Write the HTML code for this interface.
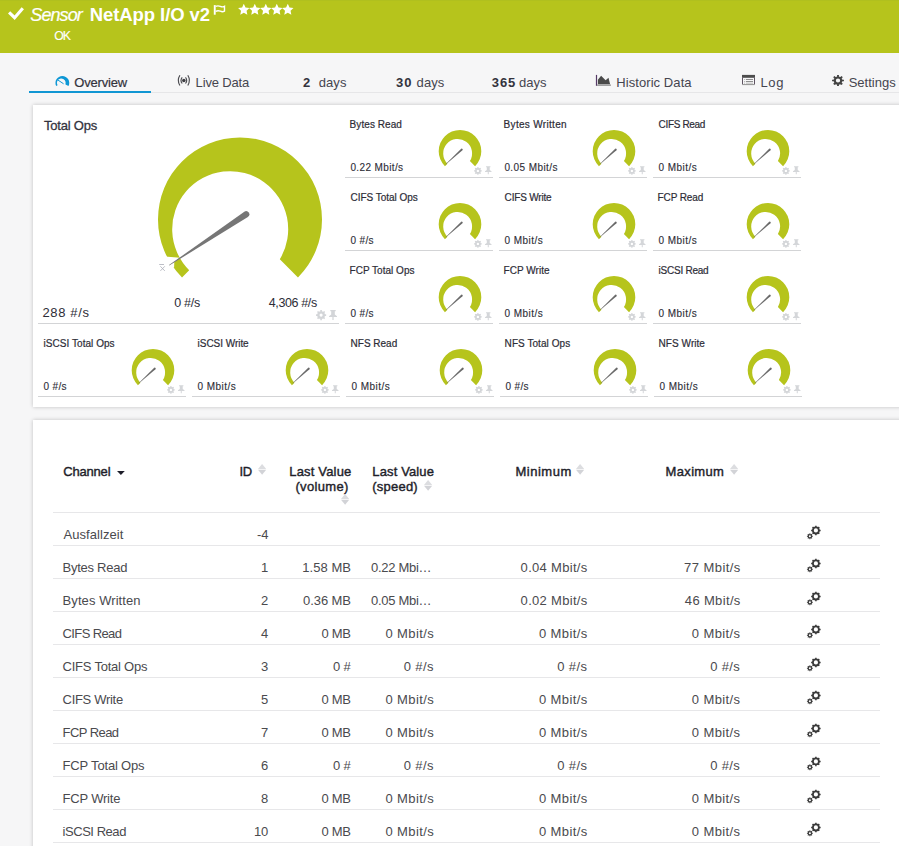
<!DOCTYPE html>
<html><head><meta charset="utf-8"><title>Sensor NetApp I/O v2</title>
<style>
*{margin:0;padding:0;box-sizing:border-box}
html,body{width:899px;height:846px;overflow:hidden}
body{background:#f6f6f7;font-family:"Liberation Sans",sans-serif;color:#3c3c46;position:relative}
.x{position:absolute;white-space:nowrap}
svg{position:absolute;overflow:visible}
#hdr{position:absolute;left:0;top:0;width:899px;height:53px;background:#b6c41c;border-top:1px solid #b0c01e}
.panel{position:absolute;background:#fff;box-shadow:0 0 4px rgba(0,0,0,.22)}
.ul{position:absolute;height:1px;background:#d3d4d6}
.rl{position:absolute;left:53px;width:827px;height:1px;background:#e7e7e9}
</style></head><body>

<div id="hdr"></div>
<svg style="left:7px;top:6px" width="18" height="16" viewBox="7 6 18 16"><path fill="none" stroke="#fff" stroke-width="3.100" stroke-linejoin="miter" d="M9.100 12.300L14.600 17.700L22.800 8.200"/></svg>
<div class="x" style="left:30.3px;top:3px;font-size:18px;line-height:24px;-webkit-text-stroke:0.2px currentColor;font-style:italic;color:#fff;letter-spacing:-0.9px;">Sensor</div>
<div class="x" style="left:89.8px;top:2px;font-size:18.5px;line-height:25px;font-weight:bold;color:#fff;letter-spacing:-0.09px;">NetApp I/O v2</div>
<div class="x" style="left:54.2px;top:28px;font-size:12.3px;line-height:16px;-webkit-text-stroke:0.12px currentColor;color:#fff;letter-spacing:-0.9px;">OK</div>
<svg style="left:205px;top:0px" width="40" height="24" viewBox="205 0 40 24"><path fill="#fff" d="M213.800 5.100h1.900v9.600h-1.900z"/><path fill="none" stroke="#fff" stroke-width="1.400" d="M215.600 6.400Q218 5.400 220.300 6.400T224.500 6.300V11.200Q222.600 12.200 220.300 11.200T215.600 11.300"/></svg>
<svg style="left:236px;top:2px" width="60" height="15" viewBox="236 2 60 15"><path fill="#fff" d="M243.80 3.80L245.50 7.45L249.51 7.95L246.56 10.70L247.33 14.65L243.80 12.70L240.27 14.65L241.04 10.70L238.09 7.95L242.10 7.45ZM254.80 3.80L256.50 7.45L260.51 7.95L257.56 10.70L258.33 14.65L254.80 12.70L251.27 14.65L252.04 10.70L249.09 7.95L253.10 7.45ZM265.80 3.80L267.50 7.45L271.51 7.95L268.56 10.70L269.33 14.65L265.80 12.70L262.27 14.65L263.04 10.70L260.09 7.95L264.10 7.45ZM276.80 3.80L278.50 7.45L282.51 7.95L279.56 10.70L280.33 14.65L276.80 12.70L273.27 14.65L274.04 10.70L271.09 7.95L275.10 7.45ZM287.80 3.80L289.50 7.45L293.51 7.95L290.56 10.70L291.33 14.65L287.80 12.70L284.27 14.65L285.04 10.70L282.09 7.95L286.10 7.45Z"/></svg>
<div class="x" style="left:29px;top:91px;width:122px;height:2px;background:#1196d3"></div>
<div class="x" style="left:151px;top:92px;width:748px;height:1px;background:#e6e6e8"></div>
<svg style="left:54px;top:74px" width="17" height="14" viewBox="54 74 17 14"><path fill="#0d97d5" d="M56.20 86.03A6.90 6.90 0 1 1 68.50 86.03L65.49 84.50A4.45 4.45 0 1 0 57.53 85.36Z"/><path stroke="#0d97d5" stroke-width="1" d="M63.600 83.800L57.900 80"/></svg>
<div class="x" style="left:74.3px;top:74px;font-size:13px;line-height:17px;-webkit-text-stroke:0.2px currentColor;color:#33333d;letter-spacing:-0.2px;">Overview</div>
<svg style="left:170px;top:70px" width="30" height="22" viewBox="170 70 30 22"><g fill="none" stroke="#4b4b50" stroke-width="1.150"><path d="M179.900 75.300Q176.700 80.400 179.900 85.500M187.800 75.300Q191 80.400 187.800 85.500M182.200 77.300Q179.800 80.400 182.200 83.500M185.500 77.300Q187.900 80.400 185.500 83.500"/></g><circle cx="183.850" cy="80.400" r="1.750" fill="#3c3c40"/></svg>
<div class="x" style="left:195.6px;top:74px;font-size:13px;line-height:17px;color:#45454f;letter-spacing:-0.16px;">Live Data</div>
<div class="x" style="left:303.1px;top:74px;font-size:13px;line-height:17px;font-weight:bold;color:#33333d;">2</div>
<div class="x" style="left:318.7px;top:74px;font-size:13px;line-height:17px;color:#45454f;letter-spacing:0.1px;">days</div>
<div class="x" style="left:395.9px;top:74px;font-size:13px;line-height:17px;font-weight:bold;color:#33333d;letter-spacing:1.2px;">30</div>
<div class="x" style="left:416.6px;top:74px;font-size:13px;line-height:17px;color:#45454f;letter-spacing:0.07px;">days</div>
<div class="x" style="left:491.8px;top:74px;font-size:13px;line-height:17px;font-weight:bold;color:#33333d;letter-spacing:0.85px;">365</div>
<div class="x" style="left:519.0px;top:74px;font-size:13px;line-height:17px;color:#45454f;">days</div>
<div class="x" style="left:616.3px;top:74px;font-size:13px;line-height:17px;color:#45454f;letter-spacing:0.07px;">Historic Data</div>
<div class="x" style="left:760.4px;top:74px;font-size:13px;line-height:17px;color:#45454f;letter-spacing:0.65px;">Log</div>
<div class="x" style="left:848.7px;top:74px;font-size:13px;line-height:17px;color:#45454f;letter-spacing:0.01px;">Settings</div>
<svg style="left:590px;top:68px" width="30" height="26" viewBox="590 68 30 26"><path fill="#4a4a4a" d="M597.900 84.200V79.800L601.100 75.700L605.600 80.200L608.500 77.800L610.100 84.200Z"/><path fill="#553a66" d="M595.900 74.900h1.200v10.900h-1.200z"/><path fill="#8c8c8c" d="M597.100 84.500h13.800v1.300h-13.800z"/></svg>
<svg style="left:735px;top:68px" width="30" height="26" viewBox="735 68 30 26"><path fill="#4d4d4d" d="M742 74.900h13v2.900h-13z"/><path fill="#5e5362" d="M742 77.800h1v6.600h-1zM754 77.800h1v6.600h-1z"/><path fill="#9b9b9b" d="M742.300 84h12.400v1.100h-12.400z"/><path fill="#6e6e6e" d="M745.900 79.200h7.100v.8h-7.100zM745.900 81h7.100v.8h-7.100z"/><path fill="#a9a9a9" d="M744 79.200h1v.8h-1zM744 81h1v.8h-1zM744 82.700h1v.8h-1zM745.900 82.700h7.100v.8h-7.100z"/></svg>
<svg style="left:832.1px;top:74.9px" width="12" height="11" viewBox="0 0 12 12" preserveAspectRatio="none"><path fill="#444" fill-rule="nonzero" d="M1.56 6.00A4.44 4.44 0 1 1 10.44 6.00A4.44 4.44 0 1 1 1.56 6.00ZM9.89 5.07L11.93 5.06L11.93 6.94L9.89 6.93ZM9.41 8.09L10.85 9.53L9.53 10.85L8.09 9.41ZM6.93 9.89L6.94 11.93L5.06 11.93L5.07 9.89ZM3.91 9.41L2.47 10.85L1.15 9.53L2.59 8.09ZM2.11 6.93L0.07 6.94L0.07 5.06L2.11 5.07ZM2.59 3.91L1.15 2.47L2.47 1.15L3.91 2.59ZM5.07 2.11L5.06 0.07L6.94 0.07L6.93 2.11ZM8.09 2.59L9.53 1.15L10.85 2.47L9.41 3.91ZM8.16 6.00A2.16 2.16 0 1 0 3.84 6.00A2.16 2.16 0 1 0 8.16 6.00Z"/></svg>
<div class="panel" style="left:33px;top:105px;width:880px;height:302px"></div>
<div class="x" style="left:43.9px;top:117px;font-size:13px;line-height:17px;-webkit-text-stroke:0.28px currentColor;color:#33333e;letter-spacing:-0.2px;">Total Ops</div>
<svg style="left:140px;top:130px" width="200" height="160" viewBox="140 130 200 160">
<path fill="#b6c41c" d="M182.02 277.38A82.00 82.00 0 1 1 297.98 277.38L279.82 259.22A58.00 58.00 0 1 0 189.19 270.21Z"/>
<path fill="#fff" d="M179.900 257.800L165 256.400L165 268.500L174.100 267.400L174.300 262Z"/>
<path fill="#767676" d="M244.32 211.70A3.20 3.20 0 0 1 247.85 217.04L169.26 265.52L168.98 265.11Z"/>
<path stroke="#b0b2bc" stroke-width=".85" fill="none" d="M159.200 264.500h4.800M160.400 266.300l4.400 4.600M164.800 266.300l-4.400 4.600"/>
</svg>
<div class="x" style="left:174.2px;top:295px;font-size:12.5px;line-height:17px;color:#2d2d37;letter-spacing:-0.25px;">0 #/s</div>
<div class="x" style="left:268.8px;top:295px;font-size:12.5px;line-height:17px;color:#2d2d37;letter-spacing:-0.38px;">4,306 #/s</div>
<div class="x" style="left:42.5px;top:304px;font-size:13px;line-height:17px;color:#2d2d37;letter-spacing:0.63px;">288 #/s</div>
<div class="ul" style="left:38px;top:323px;width:301px"></div>
<svg style="left:315.6px;top:310px" width="10.2" height="10.2" viewBox="0 0 10.2 10.2" preserveAspectRatio="none"><path fill="#d3d5d8" fill-rule="nonzero" d="M1.22 5.10A3.88 3.88 0 1 1 8.98 5.10A3.88 3.88 0 1 1 1.22 5.10ZM8.49 4.29L10.14 4.30L10.14 5.90L8.49 5.91ZM8.07 6.92L9.23 8.10L8.10 9.23L6.92 8.07ZM5.91 8.49L5.90 10.14L4.30 10.14L4.29 8.49ZM3.28 8.07L2.10 9.23L0.97 8.10L2.13 6.92ZM1.71 5.91L0.06 5.90L0.06 4.30L1.71 4.29ZM2.13 3.28L0.97 2.10L2.10 0.97L3.28 2.13ZM4.29 1.71L4.30 0.06L5.90 0.06L5.91 1.71ZM6.92 2.13L8.10 0.97L9.23 2.10L8.07 3.28ZM6.68 5.10A1.58 1.58 0 1 0 3.52 5.10A1.58 1.58 0 1 0 6.68 5.10Z"/></svg>
<svg style="position:absolute;left:329px;top:310px" width="8" height="10" viewBox="0 0 8 10"><path fill="#d3d5d8" d="M1.300 0h5.400v1.300h-.900v3.200l2.200 1.700v.900H4.600V10h-1.200V7.100H0v-.900l2.200-1.700V1.300h-.900z"/></svg>
<div class="x" style="left:349.6px;top:118px;font-size:10px;line-height:13px;-webkit-text-stroke:0.2px currentColor;color:#2d2d37;letter-spacing:0.07px;">Bytes Read</div>
<div class="x" style="left:350.4px;top:161px;font-size:10.0px;line-height:13px;-webkit-text-stroke:0.12px currentColor;color:#2d2d37;letter-spacing:0.38px;">0.22 Mbit/s</div>
<svg style="left:433px;top:125px" width="52" height="52" viewBox="433 125 52 52"><path fill="#b6c41c" d="M444.94 166.26A21.30 21.30 0 1 1 475.06 166.26L469.91 161.11A14.45 14.45 0 1 0 447.48 163.72Z"/><path fill="#6a6a6a" d="M461.20 148.81A0.95 0.95 0 0 1 462.48 150.21L445.75 164.51L445.54 164.29Z"/></svg>
<div class="ul" style="left:345px;top:177px;width:148px"></div>
<svg style="left:474px;top:166.6px" width="7.8" height="7.8" viewBox="0 0 7.8 7.8" preserveAspectRatio="none"><path fill="#d4d6d9" fill-rule="nonzero" d="M0.86 3.90A3.04 3.04 0 1 1 6.94 3.90A3.04 3.04 0 1 1 0.86 3.90ZM6.56 3.26L7.75 3.29L7.75 4.51L6.56 4.54ZM6.23 5.33L7.06 6.19L6.19 7.06L5.33 6.23ZM4.54 6.56L4.51 7.75L3.29 7.75L3.26 6.56ZM2.47 6.23L1.61 7.06L0.74 6.19L1.57 5.33ZM1.24 4.54L0.05 4.51L0.05 3.29L1.24 3.26ZM1.57 2.47L0.74 1.61L1.61 0.74L2.47 1.57ZM3.26 1.24L3.29 0.05L4.51 0.05L4.54 1.24ZM5.33 1.57L6.19 0.74L7.06 1.61L6.23 2.47ZM5.07 3.90A1.17 1.17 0 1 0 2.73 3.90A1.17 1.17 0 1 0 5.07 3.90Z"/></svg>
<svg style="position:absolute;left:485.2px;top:166.3px" width="6.5" height="8.6" viewBox="0 0 8 10"><path fill="#d4d6d9" d="M1.300 0h5.400v1.300h-.900v3.200l2.200 1.700v.900H4.600V10h-1.200V7.100H0v-.900l2.200-1.700V1.300h-.900z"/></svg>
<div class="x" style="left:503.6px;top:118px;font-size:10px;line-height:13px;-webkit-text-stroke:0.2px currentColor;color:#2d2d37;letter-spacing:0.31px;">Bytes Written</div>
<div class="x" style="left:504.4px;top:161px;font-size:10.0px;line-height:13px;-webkit-text-stroke:0.12px currentColor;color:#2d2d37;letter-spacing:0.42px;">0.05 Mbit/s</div>
<svg style="left:587px;top:125px" width="52" height="52" viewBox="587 125 52 52"><path fill="#b6c41c" d="M598.94 166.26A21.30 21.30 0 1 1 629.06 166.26L623.91 161.11A14.45 14.45 0 1 0 601.48 163.72Z"/><path fill="#6a6a6a" d="M615.20 148.81A0.95 0.95 0 0 1 616.48 150.21L599.75 164.51L599.54 164.29Z"/></svg>
<div class="ul" style="left:499px;top:177px;width:148px"></div>
<svg style="left:628px;top:166.6px" width="7.8" height="7.8" viewBox="0 0 7.8 7.8" preserveAspectRatio="none"><path fill="#d4d6d9" fill-rule="nonzero" d="M0.86 3.90A3.04 3.04 0 1 1 6.94 3.90A3.04 3.04 0 1 1 0.86 3.90ZM6.56 3.26L7.75 3.29L7.75 4.51L6.56 4.54ZM6.23 5.33L7.06 6.19L6.19 7.06L5.33 6.23ZM4.54 6.56L4.51 7.75L3.29 7.75L3.26 6.56ZM2.47 6.23L1.61 7.06L0.74 6.19L1.57 5.33ZM1.24 4.54L0.05 4.51L0.05 3.29L1.24 3.26ZM1.57 2.47L0.74 1.61L1.61 0.74L2.47 1.57ZM3.26 1.24L3.29 0.05L4.51 0.05L4.54 1.24ZM5.33 1.57L6.19 0.74L7.06 1.61L6.23 2.47ZM5.07 3.90A1.17 1.17 0 1 0 2.73 3.90A1.17 1.17 0 1 0 5.07 3.90Z"/></svg>
<svg style="position:absolute;left:639.2px;top:166.3px" width="6.5" height="8.6" viewBox="0 0 8 10"><path fill="#d4d6d9" d="M1.300 0h5.400v1.300h-.900v3.200l2.200 1.700v.900H4.600V10h-1.200V7.100H0v-.900l2.200-1.700V1.300h-.900z"/></svg>
<div class="x" style="left:658.6px;top:118px;font-size:10px;line-height:13px;-webkit-text-stroke:0.2px currentColor;color:#2d2d37;letter-spacing:-0.34px;">CIFS Read</div>
<div class="x" style="left:658.4px;top:161px;font-size:10.0px;line-height:13px;-webkit-text-stroke:0.12px currentColor;color:#2d2d37;letter-spacing:0.49px;">0 Mbit/s</div>
<svg style="left:741px;top:125px" width="52" height="52" viewBox="741 125 52 52"><path fill="#b6c41c" d="M752.94 166.26A21.30 21.30 0 1 1 783.06 166.26L777.91 161.11A14.45 14.45 0 1 0 755.48 163.72Z"/><path fill="#6a6a6a" d="M769.20 148.81A0.95 0.95 0 0 1 770.48 150.21L753.75 164.51L753.54 164.29Z"/></svg>
<div class="ul" style="left:653px;top:177px;width:148px"></div>
<svg style="left:782px;top:166.6px" width="7.8" height="7.8" viewBox="0 0 7.8 7.8" preserveAspectRatio="none"><path fill="#d4d6d9" fill-rule="nonzero" d="M0.86 3.90A3.04 3.04 0 1 1 6.94 3.90A3.04 3.04 0 1 1 0.86 3.90ZM6.56 3.26L7.75 3.29L7.75 4.51L6.56 4.54ZM6.23 5.33L7.06 6.19L6.19 7.06L5.33 6.23ZM4.54 6.56L4.51 7.75L3.29 7.75L3.26 6.56ZM2.47 6.23L1.61 7.06L0.74 6.19L1.57 5.33ZM1.24 4.54L0.05 4.51L0.05 3.29L1.24 3.26ZM1.57 2.47L0.74 1.61L1.61 0.74L2.47 1.57ZM3.26 1.24L3.29 0.05L4.51 0.05L4.54 1.24ZM5.33 1.57L6.19 0.74L7.06 1.61L6.23 2.47ZM5.07 3.90A1.17 1.17 0 1 0 2.73 3.90A1.17 1.17 0 1 0 5.07 3.90Z"/></svg>
<svg style="position:absolute;left:793.2px;top:166.3px" width="6.5" height="8.6" viewBox="0 0 8 10"><path fill="#d4d6d9" d="M1.300 0h5.400v1.300h-.900v3.200l2.200 1.700v.900H4.600V10h-1.200V7.100H0v-.900l2.200-1.700V1.300h-.900z"/></svg>
<div class="x" style="left:350.6px;top:191px;font-size:10px;line-height:13px;-webkit-text-stroke:0.2px currentColor;color:#2d2d37;letter-spacing:-0.04px;">CIFS Total Ops</div>
<div class="x" style="left:350.4px;top:234px;font-size:10.0px;line-height:13px;-webkit-text-stroke:0.12px currentColor;color:#2d2d37;letter-spacing:0.38px;">0 #/s</div>
<svg style="left:433px;top:198px" width="52" height="52" viewBox="433 198 52 52"><path fill="#b6c41c" d="M444.94 239.26A21.30 21.30 0 1 1 475.06 239.26L469.91 234.11A14.45 14.45 0 1 0 447.48 236.72Z"/><path fill="#6a6a6a" d="M461.20 221.81A0.95 0.95 0 0 1 462.48 223.21L445.75 237.51L445.54 237.29Z"/></svg>
<div class="ul" style="left:345px;top:250px;width:148px"></div>
<svg style="left:474px;top:239.6px" width="7.8" height="7.8" viewBox="0 0 7.8 7.8" preserveAspectRatio="none"><path fill="#d4d6d9" fill-rule="nonzero" d="M0.86 3.90A3.04 3.04 0 1 1 6.94 3.90A3.04 3.04 0 1 1 0.86 3.90ZM6.56 3.26L7.75 3.29L7.75 4.51L6.56 4.54ZM6.23 5.33L7.06 6.19L6.19 7.06L5.33 6.23ZM4.54 6.56L4.51 7.75L3.29 7.75L3.26 6.56ZM2.47 6.23L1.61 7.06L0.74 6.19L1.57 5.33ZM1.24 4.54L0.05 4.51L0.05 3.29L1.24 3.26ZM1.57 2.47L0.74 1.61L1.61 0.74L2.47 1.57ZM3.26 1.24L3.29 0.05L4.51 0.05L4.54 1.24ZM5.33 1.57L6.19 0.74L7.06 1.61L6.23 2.47ZM5.07 3.90A1.17 1.17 0 1 0 2.73 3.90A1.17 1.17 0 1 0 5.07 3.90Z"/></svg>
<svg style="position:absolute;left:485.2px;top:239.3px" width="6.5" height="8.6" viewBox="0 0 8 10"><path fill="#d4d6d9" d="M1.300 0h5.400v1.300h-.900v3.200l2.200 1.700v.900H4.600V10h-1.200V7.100H0v-.900l2.200-1.700V1.300h-.900z"/></svg>
<div class="x" style="left:504.6px;top:191px;font-size:10px;line-height:13px;-webkit-text-stroke:0.2px currentColor;color:#2d2d37;letter-spacing:-0.18px;">CIFS Write</div>
<div class="x" style="left:504.4px;top:234px;font-size:10.0px;line-height:13px;-webkit-text-stroke:0.12px currentColor;color:#2d2d37;letter-spacing:0.49px;">0 Mbit/s</div>
<svg style="left:587px;top:198px" width="52" height="52" viewBox="587 198 52 52"><path fill="#b6c41c" d="M598.94 239.26A21.30 21.30 0 1 1 629.06 239.26L623.91 234.11A14.45 14.45 0 1 0 601.48 236.72Z"/><path fill="#6a6a6a" d="M615.20 221.81A0.95 0.95 0 0 1 616.48 223.21L599.75 237.51L599.54 237.29Z"/></svg>
<div class="ul" style="left:499px;top:250px;width:148px"></div>
<svg style="left:628px;top:239.6px" width="7.8" height="7.8" viewBox="0 0 7.8 7.8" preserveAspectRatio="none"><path fill="#d4d6d9" fill-rule="nonzero" d="M0.86 3.90A3.04 3.04 0 1 1 6.94 3.90A3.04 3.04 0 1 1 0.86 3.90ZM6.56 3.26L7.75 3.29L7.75 4.51L6.56 4.54ZM6.23 5.33L7.06 6.19L6.19 7.06L5.33 6.23ZM4.54 6.56L4.51 7.75L3.29 7.75L3.26 6.56ZM2.47 6.23L1.61 7.06L0.74 6.19L1.57 5.33ZM1.24 4.54L0.05 4.51L0.05 3.29L1.24 3.26ZM1.57 2.47L0.74 1.61L1.61 0.74L2.47 1.57ZM3.26 1.24L3.29 0.05L4.51 0.05L4.54 1.24ZM5.33 1.57L6.19 0.74L7.06 1.61L6.23 2.47ZM5.07 3.90A1.17 1.17 0 1 0 2.73 3.90A1.17 1.17 0 1 0 5.07 3.90Z"/></svg>
<svg style="position:absolute;left:639.2px;top:239.3px" width="6.5" height="8.6" viewBox="0 0 8 10"><path fill="#d4d6d9" d="M1.300 0h5.400v1.300h-.900v3.200l2.200 1.700v.900H4.600V10h-1.200V7.100H0v-.900l2.200-1.700V1.300h-.900z"/></svg>
<div class="x" style="left:657.6px;top:191px;font-size:10px;line-height:13px;-webkit-text-stroke:0.2px currentColor;color:#2d2d37;letter-spacing:-0.13px;">FCP Read</div>
<div class="x" style="left:658.4px;top:234px;font-size:10.0px;line-height:13px;-webkit-text-stroke:0.12px currentColor;color:#2d2d37;letter-spacing:0.49px;">0 Mbit/s</div>
<svg style="left:741px;top:198px" width="52" height="52" viewBox="741 198 52 52"><path fill="#b6c41c" d="M752.94 239.26A21.30 21.30 0 1 1 783.06 239.26L777.91 234.11A14.45 14.45 0 1 0 755.48 236.72Z"/><path fill="#6a6a6a" d="M769.20 221.81A0.95 0.95 0 0 1 770.48 223.21L753.75 237.51L753.54 237.29Z"/></svg>
<div class="ul" style="left:653px;top:250px;width:148px"></div>
<svg style="left:782px;top:239.6px" width="7.8" height="7.8" viewBox="0 0 7.8 7.8" preserveAspectRatio="none"><path fill="#d4d6d9" fill-rule="nonzero" d="M0.86 3.90A3.04 3.04 0 1 1 6.94 3.90A3.04 3.04 0 1 1 0.86 3.90ZM6.56 3.26L7.75 3.29L7.75 4.51L6.56 4.54ZM6.23 5.33L7.06 6.19L6.19 7.06L5.33 6.23ZM4.54 6.56L4.51 7.75L3.29 7.75L3.26 6.56ZM2.47 6.23L1.61 7.06L0.74 6.19L1.57 5.33ZM1.24 4.54L0.05 4.51L0.05 3.29L1.24 3.26ZM1.57 2.47L0.74 1.61L1.61 0.74L2.47 1.57ZM3.26 1.24L3.29 0.05L4.51 0.05L4.54 1.24ZM5.33 1.57L6.19 0.74L7.06 1.61L6.23 2.47ZM5.07 3.90A1.17 1.17 0 1 0 2.73 3.90A1.17 1.17 0 1 0 5.07 3.90Z"/></svg>
<svg style="position:absolute;left:793.2px;top:239.3px" width="6.5" height="8.6" viewBox="0 0 8 10"><path fill="#d4d6d9" d="M1.300 0h5.400v1.300h-.900v3.200l2.200 1.700v.900H4.600V10h-1.200V7.100H0v-.900l2.200-1.700V1.300h-.900z"/></svg>
<div class="x" style="left:349.6px;top:264px;font-size:10px;line-height:13px;-webkit-text-stroke:0.2px currentColor;color:#2d2d37;letter-spacing:0.02px;">FCP Total Ops</div>
<div class="x" style="left:350.4px;top:307px;font-size:10.0px;line-height:13px;-webkit-text-stroke:0.12px currentColor;color:#2d2d37;letter-spacing:0.38px;">0 #/s</div>
<svg style="left:433px;top:271px" width="52" height="52" viewBox="433 271 52 52"><path fill="#b6c41c" d="M444.94 312.26A21.30 21.30 0 1 1 475.06 312.26L469.91 307.11A14.45 14.45 0 1 0 447.48 309.72Z"/><path fill="#6a6a6a" d="M461.20 294.81A0.95 0.95 0 0 1 462.48 296.21L445.75 310.51L445.54 310.29Z"/></svg>
<div class="ul" style="left:345px;top:323px;width:148px"></div>
<svg style="left:474px;top:312.6px" width="7.8" height="7.8" viewBox="0 0 7.8 7.8" preserveAspectRatio="none"><path fill="#d4d6d9" fill-rule="nonzero" d="M0.86 3.90A3.04 3.04 0 1 1 6.94 3.90A3.04 3.04 0 1 1 0.86 3.90ZM6.56 3.26L7.75 3.29L7.75 4.51L6.56 4.54ZM6.23 5.33L7.06 6.19L6.19 7.06L5.33 6.23ZM4.54 6.56L4.51 7.75L3.29 7.75L3.26 6.56ZM2.47 6.23L1.61 7.06L0.74 6.19L1.57 5.33ZM1.24 4.54L0.05 4.51L0.05 3.29L1.24 3.26ZM1.57 2.47L0.74 1.61L1.61 0.74L2.47 1.57ZM3.26 1.24L3.29 0.05L4.51 0.05L4.54 1.24ZM5.33 1.57L6.19 0.74L7.06 1.61L6.23 2.47ZM5.07 3.90A1.17 1.17 0 1 0 2.73 3.90A1.17 1.17 0 1 0 5.07 3.90Z"/></svg>
<svg style="position:absolute;left:485.2px;top:312.3px" width="6.5" height="8.6" viewBox="0 0 8 10"><path fill="#d4d6d9" d="M1.300 0h5.400v1.300h-.900v3.200l2.200 1.700v.900H4.600V10h-1.200V7.100H0v-.900l2.200-1.700V1.300h-.900z"/></svg>
<div class="x" style="left:503.6px;top:264px;font-size:10px;line-height:13px;-webkit-text-stroke:0.2px currentColor;color:#2d2d37;letter-spacing:0.03px;">FCP Write</div>
<div class="x" style="left:504.4px;top:307px;font-size:10.0px;line-height:13px;-webkit-text-stroke:0.12px currentColor;color:#2d2d37;letter-spacing:0.49px;">0 Mbit/s</div>
<svg style="left:587px;top:271px" width="52" height="52" viewBox="587 271 52 52"><path fill="#b6c41c" d="M598.94 312.26A21.30 21.30 0 1 1 629.06 312.26L623.91 307.11A14.45 14.45 0 1 0 601.48 309.72Z"/><path fill="#6a6a6a" d="M615.20 294.81A0.95 0.95 0 0 1 616.48 296.21L599.75 310.51L599.54 310.29Z"/></svg>
<div class="ul" style="left:499px;top:323px;width:148px"></div>
<svg style="left:628px;top:312.6px" width="7.8" height="7.8" viewBox="0 0 7.8 7.8" preserveAspectRatio="none"><path fill="#d4d6d9" fill-rule="nonzero" d="M0.86 3.90A3.04 3.04 0 1 1 6.94 3.90A3.04 3.04 0 1 1 0.86 3.90ZM6.56 3.26L7.75 3.29L7.75 4.51L6.56 4.54ZM6.23 5.33L7.06 6.19L6.19 7.06L5.33 6.23ZM4.54 6.56L4.51 7.75L3.29 7.75L3.26 6.56ZM2.47 6.23L1.61 7.06L0.74 6.19L1.57 5.33ZM1.24 4.54L0.05 4.51L0.05 3.29L1.24 3.26ZM1.57 2.47L0.74 1.61L1.61 0.74L2.47 1.57ZM3.26 1.24L3.29 0.05L4.51 0.05L4.54 1.24ZM5.33 1.57L6.19 0.74L7.06 1.61L6.23 2.47ZM5.07 3.90A1.17 1.17 0 1 0 2.73 3.90A1.17 1.17 0 1 0 5.07 3.90Z"/></svg>
<svg style="position:absolute;left:639.2px;top:312.3px" width="6.5" height="8.6" viewBox="0 0 8 10"><path fill="#d4d6d9" d="M1.300 0h5.400v1.300h-.900v3.200l2.200 1.700v.900H4.600V10h-1.200V7.100H0v-.900l2.200-1.700V1.300h-.900z"/></svg>
<div class="x" style="left:658.6px;top:264px;font-size:10px;line-height:13px;-webkit-text-stroke:0.2px currentColor;color:#2d2d37;letter-spacing:-0.24px;">iSCSI Read</div>
<div class="x" style="left:658.4px;top:307px;font-size:10.0px;line-height:13px;-webkit-text-stroke:0.12px currentColor;color:#2d2d37;letter-spacing:0.49px;">0 Mbit/s</div>
<svg style="left:741px;top:271px" width="52" height="52" viewBox="741 271 52 52"><path fill="#b6c41c" d="M752.94 312.26A21.30 21.30 0 1 1 783.06 312.26L777.91 307.11A14.45 14.45 0 1 0 755.48 309.72Z"/><path fill="#6a6a6a" d="M769.20 294.81A0.95 0.95 0 0 1 770.48 296.21L753.75 310.51L753.54 310.29Z"/></svg>
<div class="ul" style="left:653px;top:323px;width:148px"></div>
<svg style="left:782px;top:312.6px" width="7.8" height="7.8" viewBox="0 0 7.8 7.8" preserveAspectRatio="none"><path fill="#d4d6d9" fill-rule="nonzero" d="M0.86 3.90A3.04 3.04 0 1 1 6.94 3.90A3.04 3.04 0 1 1 0.86 3.90ZM6.56 3.26L7.75 3.29L7.75 4.51L6.56 4.54ZM6.23 5.33L7.06 6.19L6.19 7.06L5.33 6.23ZM4.54 6.56L4.51 7.75L3.29 7.75L3.26 6.56ZM2.47 6.23L1.61 7.06L0.74 6.19L1.57 5.33ZM1.24 4.54L0.05 4.51L0.05 3.29L1.24 3.26ZM1.57 2.47L0.74 1.61L1.61 0.74L2.47 1.57ZM3.26 1.24L3.29 0.05L4.51 0.05L4.54 1.24ZM5.33 1.57L6.19 0.74L7.06 1.61L6.23 2.47ZM5.07 3.90A1.17 1.17 0 1 0 2.73 3.90A1.17 1.17 0 1 0 5.07 3.90Z"/></svg>
<svg style="position:absolute;left:793.2px;top:312.3px" width="6.5" height="8.6" viewBox="0 0 8 10"><path fill="#d4d6d9" d="M1.300 0h5.400v1.300h-.900v3.200l2.200 1.700v.900H4.600V10h-1.200V7.100H0v-.900l2.200-1.700V1.300h-.900z"/></svg>
<div class="x" style="left:43.6px;top:337px;font-size:10px;line-height:13px;-webkit-text-stroke:0.2px currentColor;color:#2d2d37;letter-spacing:0.04px;">iSCSI Total Ops</div>
<div class="x" style="left:43.4px;top:380px;font-size:10.0px;line-height:13px;-webkit-text-stroke:0.12px currentColor;color:#2d2d37;letter-spacing:0.38px;">0 #/s</div>
<svg style="left:126px;top:344px" width="52" height="52" viewBox="126 344 52 52"><path fill="#b6c41c" d="M137.94 385.26A21.30 21.30 0 1 1 168.06 385.26L162.91 380.11A14.45 14.45 0 1 0 140.48 382.72Z"/><path fill="#6a6a6a" d="M154.20 367.81A0.95 0.95 0 0 1 155.48 369.21L138.75 383.51L138.54 383.29Z"/></svg>
<div class="ul" style="left:38px;top:396px;width:148px"></div>
<svg style="left:167px;top:385.6px" width="7.8" height="7.8" viewBox="0 0 7.8 7.8" preserveAspectRatio="none"><path fill="#d4d6d9" fill-rule="nonzero" d="M0.86 3.90A3.04 3.04 0 1 1 6.94 3.90A3.04 3.04 0 1 1 0.86 3.90ZM6.56 3.26L7.75 3.29L7.75 4.51L6.56 4.54ZM6.23 5.33L7.06 6.19L6.19 7.06L5.33 6.23ZM4.54 6.56L4.51 7.75L3.29 7.75L3.26 6.56ZM2.47 6.23L1.61 7.06L0.74 6.19L1.57 5.33ZM1.24 4.54L0.05 4.51L0.05 3.29L1.24 3.26ZM1.57 2.47L0.74 1.61L1.61 0.74L2.47 1.57ZM3.26 1.24L3.29 0.05L4.51 0.05L4.54 1.24ZM5.33 1.57L6.19 0.74L7.06 1.61L6.23 2.47ZM5.07 3.90A1.17 1.17 0 1 0 2.73 3.90A1.17 1.17 0 1 0 5.07 3.90Z"/></svg>
<svg style="position:absolute;left:178.2px;top:385.3px" width="6.5" height="8.6" viewBox="0 0 8 10"><path fill="#d4d6d9" d="M1.300 0h5.400v1.300h-.900v3.200l2.200 1.700v.900H4.600V10h-1.200V7.100H0v-.900l2.200-1.700V1.300h-.900z"/></svg>
<div class="x" style="left:197.6px;top:337px;font-size:10px;line-height:13px;-webkit-text-stroke:0.2px currentColor;color:#2d2d37;letter-spacing:-0.04px;">iSCSI Write</div>
<div class="x" style="left:197.4px;top:380px;font-size:10.0px;line-height:13px;-webkit-text-stroke:0.12px currentColor;color:#2d2d37;letter-spacing:0.49px;">0 Mbit/s</div>
<svg style="left:280px;top:344px" width="52" height="52" viewBox="280 344 52 52"><path fill="#b6c41c" d="M291.94 385.26A21.30 21.30 0 1 1 322.06 385.26L316.91 380.11A14.45 14.45 0 1 0 294.48 382.72Z"/><path fill="#6a6a6a" d="M308.20 367.81A0.95 0.95 0 0 1 309.48 369.21L292.75 383.51L292.54 383.29Z"/></svg>
<div class="ul" style="left:192px;top:396px;width:148px"></div>
<svg style="left:321px;top:385.6px" width="7.8" height="7.8" viewBox="0 0 7.8 7.8" preserveAspectRatio="none"><path fill="#d4d6d9" fill-rule="nonzero" d="M0.86 3.90A3.04 3.04 0 1 1 6.94 3.90A3.04 3.04 0 1 1 0.86 3.90ZM6.56 3.26L7.75 3.29L7.75 4.51L6.56 4.54ZM6.23 5.33L7.06 6.19L6.19 7.06L5.33 6.23ZM4.54 6.56L4.51 7.75L3.29 7.75L3.26 6.56ZM2.47 6.23L1.61 7.06L0.74 6.19L1.57 5.33ZM1.24 4.54L0.05 4.51L0.05 3.29L1.24 3.26ZM1.57 2.47L0.74 1.61L1.61 0.74L2.47 1.57ZM3.26 1.24L3.29 0.05L4.51 0.05L4.54 1.24ZM5.33 1.57L6.19 0.74L7.06 1.61L6.23 2.47ZM5.07 3.90A1.17 1.17 0 1 0 2.73 3.90A1.17 1.17 0 1 0 5.07 3.90Z"/></svg>
<svg style="position:absolute;left:332.2px;top:385.3px" width="6.5" height="8.6" viewBox="0 0 8 10"><path fill="#d4d6d9" d="M1.300 0h5.400v1.300h-.900v3.200l2.200 1.700v.900H4.600V10h-1.200V7.100H0v-.900l2.200-1.700V1.300h-.900z"/></svg>
<div class="x" style="left:350.6px;top:337px;font-size:10px;line-height:13px;-webkit-text-stroke:0.2px currentColor;color:#2d2d37;letter-spacing:-0.01px;">NFS Read</div>
<div class="x" style="left:351.4px;top:380px;font-size:10.0px;line-height:13px;-webkit-text-stroke:0.12px currentColor;color:#2d2d37;letter-spacing:0.49px;">0 Mbit/s</div>
<svg style="left:434px;top:344px" width="52" height="52" viewBox="434 344 52 52"><path fill="#b6c41c" d="M445.94 385.26A21.30 21.30 0 1 1 476.06 385.26L470.91 380.11A14.45 14.45 0 1 0 448.48 382.72Z"/><path fill="#6a6a6a" d="M462.20 367.81A0.95 0.95 0 0 1 463.48 369.21L446.75 383.51L446.54 383.29Z"/></svg>
<div class="ul" style="left:346px;top:396px;width:148px"></div>
<svg style="left:475px;top:385.6px" width="7.8" height="7.8" viewBox="0 0 7.8 7.8" preserveAspectRatio="none"><path fill="#d4d6d9" fill-rule="nonzero" d="M0.86 3.90A3.04 3.04 0 1 1 6.94 3.90A3.04 3.04 0 1 1 0.86 3.90ZM6.56 3.26L7.75 3.29L7.75 4.51L6.56 4.54ZM6.23 5.33L7.06 6.19L6.19 7.06L5.33 6.23ZM4.54 6.56L4.51 7.75L3.29 7.75L3.26 6.56ZM2.47 6.23L1.61 7.06L0.74 6.19L1.57 5.33ZM1.24 4.54L0.05 4.51L0.05 3.29L1.24 3.26ZM1.57 2.47L0.74 1.61L1.61 0.74L2.47 1.57ZM3.26 1.24L3.29 0.05L4.51 0.05L4.54 1.24ZM5.33 1.57L6.19 0.74L7.06 1.61L6.23 2.47ZM5.07 3.90A1.17 1.17 0 1 0 2.73 3.90A1.17 1.17 0 1 0 5.07 3.90Z"/></svg>
<svg style="position:absolute;left:486.2px;top:385.3px" width="6.5" height="8.6" viewBox="0 0 8 10"><path fill="#d4d6d9" d="M1.300 0h5.400v1.300h-.900v3.200l2.200 1.700v.900H4.600V10h-1.200V7.100H0v-.900l2.200-1.700V1.300h-.900z"/></svg>
<div class="x" style="left:504.6px;top:337px;font-size:10px;line-height:13px;-webkit-text-stroke:0.2px currentColor;color:#2d2d37;letter-spacing:0.06px;">NFS Total Ops</div>
<div class="x" style="left:505.4px;top:380px;font-size:10.0px;line-height:13px;-webkit-text-stroke:0.12px currentColor;color:#2d2d37;letter-spacing:0.38px;">0 #/s</div>
<svg style="left:588px;top:344px" width="52" height="52" viewBox="588 344 52 52"><path fill="#b6c41c" d="M599.94 385.26A21.30 21.30 0 1 1 630.06 385.26L624.91 380.11A14.45 14.45 0 1 0 602.48 382.72Z"/><path fill="#6a6a6a" d="M616.20 367.81A0.95 0.95 0 0 1 617.48 369.21L600.75 383.51L600.54 383.29Z"/></svg>
<div class="ul" style="left:500px;top:396px;width:148px"></div>
<svg style="left:629px;top:385.6px" width="7.8" height="7.8" viewBox="0 0 7.8 7.8" preserveAspectRatio="none"><path fill="#d4d6d9" fill-rule="nonzero" d="M0.86 3.90A3.04 3.04 0 1 1 6.94 3.90A3.04 3.04 0 1 1 0.86 3.90ZM6.56 3.26L7.75 3.29L7.75 4.51L6.56 4.54ZM6.23 5.33L7.06 6.19L6.19 7.06L5.33 6.23ZM4.54 6.56L4.51 7.75L3.29 7.75L3.26 6.56ZM2.47 6.23L1.61 7.06L0.74 6.19L1.57 5.33ZM1.24 4.54L0.05 4.51L0.05 3.29L1.24 3.26ZM1.57 2.47L0.74 1.61L1.61 0.74L2.47 1.57ZM3.26 1.24L3.29 0.05L4.51 0.05L4.54 1.24ZM5.33 1.57L6.19 0.74L7.06 1.61L6.23 2.47ZM5.07 3.90A1.17 1.17 0 1 0 2.73 3.90A1.17 1.17 0 1 0 5.07 3.90Z"/></svg>
<svg style="position:absolute;left:640.2px;top:385.3px" width="6.5" height="8.6" viewBox="0 0 8 10"><path fill="#d4d6d9" d="M1.300 0h5.400v1.300h-.900v3.200l2.200 1.700v.900H4.600V10h-1.200V7.100H0v-.900l2.200-1.700V1.300h-.900z"/></svg>
<div class="x" style="left:658.6px;top:337px;font-size:10px;line-height:13px;-webkit-text-stroke:0.2px currentColor;color:#2d2d37;letter-spacing:0.05px;">NFS Write</div>
<div class="x" style="left:659.4px;top:380px;font-size:10.0px;line-height:13px;-webkit-text-stroke:0.12px currentColor;color:#2d2d37;letter-spacing:0.49px;">0 Mbit/s</div>
<svg style="left:742px;top:344px" width="52" height="52" viewBox="742 344 52 52"><path fill="#b6c41c" d="M753.94 385.26A21.30 21.30 0 1 1 784.06 385.26L778.91 380.11A14.45 14.45 0 1 0 756.48 382.72Z"/><path fill="#6a6a6a" d="M770.20 367.81A0.95 0.95 0 0 1 771.48 369.21L754.75 383.51L754.54 383.29Z"/></svg>
<div class="ul" style="left:654px;top:396px;width:148px"></div>
<svg style="left:783px;top:385.6px" width="7.8" height="7.8" viewBox="0 0 7.8 7.8" preserveAspectRatio="none"><path fill="#d4d6d9" fill-rule="nonzero" d="M0.86 3.90A3.04 3.04 0 1 1 6.94 3.90A3.04 3.04 0 1 1 0.86 3.90ZM6.56 3.26L7.75 3.29L7.75 4.51L6.56 4.54ZM6.23 5.33L7.06 6.19L6.19 7.06L5.33 6.23ZM4.54 6.56L4.51 7.75L3.29 7.75L3.26 6.56ZM2.47 6.23L1.61 7.06L0.74 6.19L1.57 5.33ZM1.24 4.54L0.05 4.51L0.05 3.29L1.24 3.26ZM1.57 2.47L0.74 1.61L1.61 0.74L2.47 1.57ZM3.26 1.24L3.29 0.05L4.51 0.05L4.54 1.24ZM5.33 1.57L6.19 0.74L7.06 1.61L6.23 2.47ZM5.07 3.90A1.17 1.17 0 1 0 2.73 3.90A1.17 1.17 0 1 0 5.07 3.90Z"/></svg>
<svg style="position:absolute;left:794.2px;top:385.3px" width="6.5" height="8.6" viewBox="0 0 8 10"><path fill="#d4d6d9" d="M1.300 0h5.400v1.300h-.900v3.200l2.200 1.700v.900H4.600V10h-1.200V7.100H0v-.900l2.200-1.700V1.300h-.900z"/></svg>
<div class="panel" style="left:33px;top:420px;width:880px;height:440px"></div>
<div class="x" style="left:63.3px;top:463px;font-size:13px;line-height:17px;-webkit-text-stroke:0.4px currentColor;color:#1e1e2a;letter-spacing:-0.2px;">Channel</div>
<div class="x" style="left:239.6px;top:463px;font-size:13px;line-height:17px;-webkit-text-stroke:0.4px currentColor;color:#1e1e2a;letter-spacing:-0.5px;">ID</div>
<div class="x" style="left:289.3px;top:463px;font-size:13px;line-height:17px;-webkit-text-stroke:0.4px currentColor;color:#1e1e2a;letter-spacing:0.17px;">Last Value</div>
<div class="x" style="left:295.4px;top:478px;font-size:13px;line-height:17px;-webkit-text-stroke:0.4px currentColor;color:#1e1e2a;letter-spacing:0.34px;">(volume)</div>
<div class="x" style="left:372.3px;top:463px;font-size:13px;line-height:17px;-webkit-text-stroke:0.4px currentColor;color:#1e1e2a;letter-spacing:0.13px;">Last Value</div>
<div class="x" style="left:372.3px;top:478px;font-size:13px;line-height:17px;-webkit-text-stroke:0.4px currentColor;color:#1e1e2a;letter-spacing:0.22px;">(speed)</div>
<div class="x" style="left:515.4px;top:463px;font-size:13px;line-height:17px;-webkit-text-stroke:0.4px currentColor;color:#1e1e2a;letter-spacing:0.52px;">Minimum</div>
<div class="x" style="left:665.6px;top:463px;font-size:13px;line-height:17px;-webkit-text-stroke:0.4px currentColor;color:#1e1e2a;letter-spacing:0.33px;">Maximum</div>
<svg style="left:116.500px;top:471px" width="7.800" height="4" viewBox="0 0 7.800 4"><path fill="#1e1e2a" d="M0 0h7.800L3.900 4z"/></svg>
<svg style="position:absolute;left:257.7px;top:464.2px" width="8.200" height="10.700" viewBox="0 0 8.200 10.700"><path fill="#dcdde0" d="M4.100 0L8.200 5H0z"/><path fill="#d2d3d7" d="M4.100 10.700L0 5.700H8.200z"/></svg>
<svg style="position:absolute;left:341.2px;top:494.3px" width="8.200" height="10.700" viewBox="0 0 8.200 10.700"><path fill="#dcdde0" d="M4.100 0L8.200 5H0z"/><path fill="#d2d3d7" d="M4.100 10.700L0 5.700H8.200z"/></svg>
<svg style="position:absolute;left:423.6px;top:479.5px" width="8.200" height="10.700" viewBox="0 0 8.200 10.700"><path fill="#dcdde0" d="M4.100 0L8.200 5H0z"/><path fill="#d2d3d7" d="M4.100 10.700L0 5.700H8.200z"/></svg>
<svg style="position:absolute;left:576.3px;top:464.2px" width="8.200" height="10.700" viewBox="0 0 8.200 10.700"><path fill="#dcdde0" d="M4.100 0L8.200 5H0z"/><path fill="#d2d3d7" d="M4.100 10.700L0 5.700H8.200z"/></svg>
<svg style="position:absolute;left:729.5px;top:464.2px" width="8.200" height="10.700" viewBox="0 0 8.200 10.700"><path fill="#dcdde0" d="M4.100 0L8.200 5H0z"/><path fill="#d2d3d7" d="M4.100 10.700L0 5.700H8.200z"/></svg>
<div class="rl" style="top:512px"></div>
<div class="x" style="left:63.6px;top:526px;font-size:13px;line-height:17px;color:#4a4a4e;letter-spacing:0.04px;">Ausfallzeit</div>
<div class="x" style="left:256.9px;top:526px;font-size:13px;line-height:17px;color:#4a4a4e;">-4</div>
<svg style="left:800px;top:512px" width="30" height="33" viewBox="800 512 30 33"><path fill="#3a3a3a" fill-rule="nonzero" d="M812.00 530.40A3.90 3.90 0 1 1 819.80 530.40A3.90 3.90 0 1 1 812.00 530.40ZM819.31 529.58L820.64 529.65L820.64 531.15L819.31 531.22ZM818.89 532.23L819.78 533.22L818.72 534.28L817.73 533.39ZM816.72 533.81L816.65 535.14L815.15 535.14L815.08 533.81ZM814.07 533.39L813.08 534.28L812.02 533.22L812.91 532.23ZM812.49 531.22L811.16 531.15L811.16 529.65L812.49 529.58ZM812.91 528.57L812.02 527.58L813.08 526.52L814.07 527.41ZM815.08 526.99L815.15 525.66L816.65 525.66L816.72 526.99ZM817.73 527.41L818.72 526.52L819.78 527.58L818.89 528.57ZM818.00 530.40A2.10 2.10 0 1 0 813.80 530.40A2.10 2.10 0 1 0 818.00 530.40ZM807.55 536.30A2.35 2.35 0 1 1 812.25 536.30A2.35 2.35 0 1 1 807.55 536.30ZM811.96 535.81L812.86 535.83L812.86 536.77L811.96 536.79ZM811.70 537.41L812.33 538.06L811.66 538.73L811.01 538.10ZM810.39 538.36L810.37 539.26L809.43 539.26L809.41 538.36ZM808.79 538.10L808.14 538.73L807.47 538.06L808.10 537.41ZM807.84 536.79L806.94 536.77L806.94 535.83L807.84 535.81ZM808.10 535.19L807.47 534.54L808.14 533.87L808.79 534.50ZM809.41 534.24L809.43 533.34L810.37 533.34L810.39 534.24ZM811.01 534.50L811.66 533.87L812.33 534.54L811.70 535.19ZM810.95 536.30A1.05 1.05 0 1 0 808.85 536.30A1.05 1.05 0 1 0 810.95 536.30Z"/></svg>
<div class="rl" style="top:545px"></div>
<div class="x" style="left:62.6px;top:559px;font-size:13px;line-height:17px;color:#4a4a4e;letter-spacing:-0.27px;">Bytes Read</div>
<div class="x" style="left:260.9px;top:559px;font-size:13px;line-height:17px;color:#4a4a4e;">1</div>
<div class="x" style="left:302.3px;top:559px;font-size:13px;line-height:17px;color:#4a4a4e;letter-spacing:0.05px;">1.58 MB</div>
<div class="x" style="left:371.1px;top:559px;font-size:13px;line-height:17px;color:#4a4a4e;letter-spacing:-0.31px;">0.22 Mbi…</div>
<div class="x" style="left:520.6px;top:559px;font-size:13px;line-height:17px;color:#4a4a4e;letter-spacing:0.31px;">0.04 Mbit/s</div>
<div class="x" style="left:684.0px;top:559px;font-size:13px;line-height:17px;color:#4a4a4e;letter-spacing:0.45px;">77 Mbit/s</div>
<svg style="left:800px;top:545px" width="30" height="33" viewBox="800 545 30 33"><path fill="#3a3a3a" fill-rule="nonzero" d="M812.00 563.40A3.90 3.90 0 1 1 819.80 563.40A3.90 3.90 0 1 1 812.00 563.40ZM819.31 562.58L820.64 562.65L820.64 564.15L819.31 564.22ZM818.89 565.23L819.78 566.22L818.72 567.28L817.73 566.39ZM816.72 566.81L816.65 568.14L815.15 568.14L815.08 566.81ZM814.07 566.39L813.08 567.28L812.02 566.22L812.91 565.23ZM812.49 564.22L811.16 564.15L811.16 562.65L812.49 562.58ZM812.91 561.57L812.02 560.58L813.08 559.52L814.07 560.41ZM815.08 559.99L815.15 558.66L816.65 558.66L816.72 559.99ZM817.73 560.41L818.72 559.52L819.78 560.58L818.89 561.57ZM818.00 563.40A2.10 2.10 0 1 0 813.80 563.40A2.10 2.10 0 1 0 818.00 563.40ZM807.55 569.30A2.35 2.35 0 1 1 812.25 569.30A2.35 2.35 0 1 1 807.55 569.30ZM811.96 568.81L812.86 568.83L812.86 569.77L811.96 569.79ZM811.70 570.41L812.33 571.06L811.66 571.73L811.01 571.10ZM810.39 571.36L810.37 572.26L809.43 572.26L809.41 571.36ZM808.79 571.10L808.14 571.73L807.47 571.06L808.10 570.41ZM807.84 569.79L806.94 569.77L806.94 568.83L807.84 568.81ZM808.10 568.19L807.47 567.54L808.14 566.87L808.79 567.50ZM809.41 567.24L809.43 566.34L810.37 566.34L810.39 567.24ZM811.01 567.50L811.66 566.87L812.33 567.54L811.70 568.19ZM810.95 569.30A1.05 1.05 0 1 0 808.85 569.30A1.05 1.05 0 1 0 810.95 569.30Z"/></svg>
<div class="rl" style="top:578px"></div>
<div class="x" style="left:62.6px;top:592px;font-size:13px;line-height:17px;color:#4a4a4e;letter-spacing:0.07px;">Bytes Written</div>
<div class="x" style="left:260.9px;top:592px;font-size:13px;line-height:17px;color:#4a4a4e;">2</div>
<div class="x" style="left:303.1px;top:592px;font-size:13px;line-height:17px;color:#4a4a4e;letter-spacing:-0.08px;">0.36 MB</div>
<div class="x" style="left:371.1px;top:592px;font-size:13px;line-height:17px;color:#4a4a4e;letter-spacing:-0.31px;">0.05 Mbi…</div>
<div class="x" style="left:520.6px;top:592px;font-size:13px;line-height:17px;color:#4a4a4e;letter-spacing:0.31px;">0.02 Mbit/s</div>
<div class="x" style="left:684.8px;top:592px;font-size:13px;line-height:17px;color:#4a4a4e;letter-spacing:0.35px;">46 Mbit/s</div>
<svg style="left:800px;top:578px" width="30" height="33" viewBox="800 578 30 33"><path fill="#3a3a3a" fill-rule="nonzero" d="M812.00 596.40A3.90 3.90 0 1 1 819.80 596.40A3.90 3.90 0 1 1 812.00 596.40ZM819.31 595.58L820.64 595.65L820.64 597.15L819.31 597.22ZM818.89 598.23L819.78 599.22L818.72 600.28L817.73 599.39ZM816.72 599.81L816.65 601.14L815.15 601.14L815.08 599.81ZM814.07 599.39L813.08 600.28L812.02 599.22L812.91 598.23ZM812.49 597.22L811.16 597.15L811.16 595.65L812.49 595.58ZM812.91 594.57L812.02 593.58L813.08 592.52L814.07 593.41ZM815.08 592.99L815.15 591.66L816.65 591.66L816.72 592.99ZM817.73 593.41L818.72 592.52L819.78 593.58L818.89 594.57ZM818.00 596.40A2.10 2.10 0 1 0 813.80 596.40A2.10 2.10 0 1 0 818.00 596.40ZM807.55 602.30A2.35 2.35 0 1 1 812.25 602.30A2.35 2.35 0 1 1 807.55 602.30ZM811.96 601.81L812.86 601.83L812.86 602.77L811.96 602.79ZM811.70 603.41L812.33 604.06L811.66 604.73L811.01 604.10ZM810.39 604.36L810.37 605.26L809.43 605.26L809.41 604.36ZM808.79 604.10L808.14 604.73L807.47 604.06L808.10 603.41ZM807.84 602.79L806.94 602.77L806.94 601.83L807.84 601.81ZM808.10 601.19L807.47 600.54L808.14 599.87L808.79 600.50ZM809.41 600.24L809.43 599.34L810.37 599.34L810.39 600.24ZM811.01 600.50L811.66 599.87L812.33 600.54L811.70 601.19ZM810.95 602.30A1.05 1.05 0 1 0 808.85 602.30A1.05 1.05 0 1 0 810.95 602.30Z"/></svg>
<div class="rl" style="top:611px"></div>
<div class="x" style="left:62.6px;top:625px;font-size:13px;line-height:17px;color:#4a4a4e;letter-spacing:-0.62px;">CIFS Read</div>
<div class="x" style="left:260.9px;top:625px;font-size:13px;line-height:17px;color:#4a4a4e;">4</div>
<div class="x" style="left:321.4px;top:625px;font-size:13px;line-height:17px;color:#4a4a4e;letter-spacing:-0.27px;">0 MB</div>
<div class="x" style="left:385.4px;top:625px;font-size:13px;line-height:17px;color:#4a4a4e;letter-spacing:0.4px;">0 Mbit/s</div>
<div class="x" style="left:538.9px;top:625px;font-size:13px;line-height:17px;color:#4a4a4e;letter-spacing:0.4px;">0 Mbit/s</div>
<div class="x" style="left:691.8px;top:625px;font-size:13px;line-height:17px;color:#4a4a4e;letter-spacing:0.4px;">0 Mbit/s</div>
<svg style="left:800px;top:611px" width="30" height="33" viewBox="800 611 30 33"><path fill="#3a3a3a" fill-rule="nonzero" d="M812.00 629.40A3.90 3.90 0 1 1 819.80 629.40A3.90 3.90 0 1 1 812.00 629.40ZM819.31 628.58L820.64 628.65L820.64 630.15L819.31 630.22ZM818.89 631.23L819.78 632.22L818.72 633.28L817.73 632.39ZM816.72 632.81L816.65 634.14L815.15 634.14L815.08 632.81ZM814.07 632.39L813.08 633.28L812.02 632.22L812.91 631.23ZM812.49 630.22L811.16 630.15L811.16 628.65L812.49 628.58ZM812.91 627.57L812.02 626.58L813.08 625.52L814.07 626.41ZM815.08 625.99L815.15 624.66L816.65 624.66L816.72 625.99ZM817.73 626.41L818.72 625.52L819.78 626.58L818.89 627.57ZM818.00 629.40A2.10 2.10 0 1 0 813.80 629.40A2.10 2.10 0 1 0 818.00 629.40ZM807.55 635.30A2.35 2.35 0 1 1 812.25 635.30A2.35 2.35 0 1 1 807.55 635.30ZM811.96 634.81L812.86 634.83L812.86 635.77L811.96 635.79ZM811.70 636.41L812.33 637.06L811.66 637.73L811.01 637.10ZM810.39 637.36L810.37 638.26L809.43 638.26L809.41 637.36ZM808.79 637.10L808.14 637.73L807.47 637.06L808.10 636.41ZM807.84 635.79L806.94 635.77L806.94 634.83L807.84 634.81ZM808.10 634.19L807.47 633.54L808.14 632.87L808.79 633.50ZM809.41 633.24L809.43 632.34L810.37 632.34L810.39 633.24ZM811.01 633.50L811.66 632.87L812.33 633.54L811.70 634.19ZM810.95 635.30A1.05 1.05 0 1 0 808.85 635.30A1.05 1.05 0 1 0 810.95 635.30Z"/></svg>
<div class="rl" style="top:644px"></div>
<div class="x" style="left:62.6px;top:658px;font-size:13px;line-height:17px;color:#4a4a4e;letter-spacing:-0.24px;">CIFS Total Ops</div>
<div class="x" style="left:260.9px;top:658px;font-size:13px;line-height:17px;color:#4a4a4e;">3</div>
<div class="x" style="left:332.9px;top:658px;font-size:13px;line-height:17px;color:#4a4a4e;letter-spacing:-0.15px;">0 #</div>
<div class="x" style="left:403.8px;top:658px;font-size:13px;line-height:17px;color:#4a4a4e;letter-spacing:0.35px;">0 #/s</div>
<div class="x" style="left:557.3px;top:658px;font-size:13px;line-height:17px;color:#4a4a4e;letter-spacing:0.35px;">0 #/s</div>
<div class="x" style="left:710.2px;top:658px;font-size:13px;line-height:17px;color:#4a4a4e;letter-spacing:0.35px;">0 #/s</div>
<svg style="left:800px;top:644px" width="30" height="33" viewBox="800 644 30 33"><path fill="#3a3a3a" fill-rule="nonzero" d="M812.00 662.40A3.90 3.90 0 1 1 819.80 662.40A3.90 3.90 0 1 1 812.00 662.40ZM819.31 661.58L820.64 661.65L820.64 663.15L819.31 663.22ZM818.89 664.23L819.78 665.22L818.72 666.28L817.73 665.39ZM816.72 665.81L816.65 667.14L815.15 667.14L815.08 665.81ZM814.07 665.39L813.08 666.28L812.02 665.22L812.91 664.23ZM812.49 663.22L811.16 663.15L811.16 661.65L812.49 661.58ZM812.91 660.57L812.02 659.58L813.08 658.52L814.07 659.41ZM815.08 658.99L815.15 657.66L816.65 657.66L816.72 658.99ZM817.73 659.41L818.72 658.52L819.78 659.58L818.89 660.57ZM818.00 662.40A2.10 2.10 0 1 0 813.80 662.40A2.10 2.10 0 1 0 818.00 662.40ZM807.55 668.30A2.35 2.35 0 1 1 812.25 668.30A2.35 2.35 0 1 1 807.55 668.30ZM811.96 667.81L812.86 667.83L812.86 668.77L811.96 668.79ZM811.70 669.41L812.33 670.06L811.66 670.73L811.01 670.10ZM810.39 670.36L810.37 671.26L809.43 671.26L809.41 670.36ZM808.79 670.10L808.14 670.73L807.47 670.06L808.10 669.41ZM807.84 668.79L806.94 668.77L806.94 667.83L807.84 667.81ZM808.10 667.19L807.47 666.54L808.14 665.87L808.79 666.50ZM809.41 666.24L809.43 665.34L810.37 665.34L810.39 666.24ZM811.01 666.50L811.66 665.87L812.33 666.54L811.70 667.19ZM810.95 668.30A1.05 1.05 0 1 0 808.85 668.30A1.05 1.05 0 1 0 810.95 668.30Z"/></svg>
<div class="rl" style="top:677px"></div>
<div class="x" style="left:62.6px;top:691px;font-size:13px;line-height:17px;color:#4a4a4e;letter-spacing:-0.31px;">CIFS Write</div>
<div class="x" style="left:260.9px;top:691px;font-size:13px;line-height:17px;color:#4a4a4e;">5</div>
<div class="x" style="left:321.4px;top:691px;font-size:13px;line-height:17px;color:#4a4a4e;letter-spacing:-0.27px;">0 MB</div>
<div class="x" style="left:385.4px;top:691px;font-size:13px;line-height:17px;color:#4a4a4e;letter-spacing:0.4px;">0 Mbit/s</div>
<div class="x" style="left:538.9px;top:691px;font-size:13px;line-height:17px;color:#4a4a4e;letter-spacing:0.4px;">0 Mbit/s</div>
<div class="x" style="left:691.8px;top:691px;font-size:13px;line-height:17px;color:#4a4a4e;letter-spacing:0.4px;">0 Mbit/s</div>
<svg style="left:800px;top:677px" width="30" height="33" viewBox="800 677 30 33"><path fill="#3a3a3a" fill-rule="nonzero" d="M812.00 695.40A3.90 3.90 0 1 1 819.80 695.40A3.90 3.90 0 1 1 812.00 695.40ZM819.31 694.58L820.64 694.65L820.64 696.15L819.31 696.22ZM818.89 697.23L819.78 698.22L818.72 699.28L817.73 698.39ZM816.72 698.81L816.65 700.14L815.15 700.14L815.08 698.81ZM814.07 698.39L813.08 699.28L812.02 698.22L812.91 697.23ZM812.49 696.22L811.16 696.15L811.16 694.65L812.49 694.58ZM812.91 693.57L812.02 692.58L813.08 691.52L814.07 692.41ZM815.08 691.99L815.15 690.66L816.65 690.66L816.72 691.99ZM817.73 692.41L818.72 691.52L819.78 692.58L818.89 693.57ZM818.00 695.40A2.10 2.10 0 1 0 813.80 695.40A2.10 2.10 0 1 0 818.00 695.40ZM807.55 701.30A2.35 2.35 0 1 1 812.25 701.30A2.35 2.35 0 1 1 807.55 701.30ZM811.96 700.81L812.86 700.83L812.86 701.77L811.96 701.79ZM811.70 702.41L812.33 703.06L811.66 703.73L811.01 703.10ZM810.39 703.36L810.37 704.26L809.43 704.26L809.41 703.36ZM808.79 703.10L808.14 703.73L807.47 703.06L808.10 702.41ZM807.84 701.79L806.94 701.77L806.94 700.83L807.84 700.81ZM808.10 700.19L807.47 699.54L808.14 698.87L808.79 699.50ZM809.41 699.24L809.43 698.34L810.37 698.34L810.39 699.24ZM811.01 699.50L811.66 698.87L812.33 699.54L811.70 700.19ZM810.95 701.30A1.05 1.05 0 1 0 808.85 701.30A1.05 1.05 0 1 0 810.95 701.30Z"/></svg>
<div class="rl" style="top:710px"></div>
<div class="x" style="left:62.6px;top:724px;font-size:13px;line-height:17px;color:#4a4a4e;letter-spacing:-0.57px;">FCP Read</div>
<div class="x" style="left:260.9px;top:724px;font-size:13px;line-height:17px;color:#4a4a4e;">7</div>
<div class="x" style="left:321.4px;top:724px;font-size:13px;line-height:17px;color:#4a4a4e;letter-spacing:-0.27px;">0 MB</div>
<div class="x" style="left:385.4px;top:724px;font-size:13px;line-height:17px;color:#4a4a4e;letter-spacing:0.4px;">0 Mbit/s</div>
<div class="x" style="left:538.9px;top:724px;font-size:13px;line-height:17px;color:#4a4a4e;letter-spacing:0.4px;">0 Mbit/s</div>
<div class="x" style="left:691.8px;top:724px;font-size:13px;line-height:17px;color:#4a4a4e;letter-spacing:0.4px;">0 Mbit/s</div>
<svg style="left:800px;top:710px" width="30" height="33" viewBox="800 710 30 33"><path fill="#3a3a3a" fill-rule="nonzero" d="M812.00 728.40A3.90 3.90 0 1 1 819.80 728.40A3.90 3.90 0 1 1 812.00 728.40ZM819.31 727.58L820.64 727.65L820.64 729.15L819.31 729.22ZM818.89 730.23L819.78 731.22L818.72 732.28L817.73 731.39ZM816.72 731.81L816.65 733.14L815.15 733.14L815.08 731.81ZM814.07 731.39L813.08 732.28L812.02 731.22L812.91 730.23ZM812.49 729.22L811.16 729.15L811.16 727.65L812.49 727.58ZM812.91 726.57L812.02 725.58L813.08 724.52L814.07 725.41ZM815.08 724.99L815.15 723.66L816.65 723.66L816.72 724.99ZM817.73 725.41L818.72 724.52L819.78 725.58L818.89 726.57ZM818.00 728.40A2.10 2.10 0 1 0 813.80 728.40A2.10 2.10 0 1 0 818.00 728.40ZM807.55 734.30A2.35 2.35 0 1 1 812.25 734.30A2.35 2.35 0 1 1 807.55 734.30ZM811.96 733.81L812.86 733.83L812.86 734.77L811.96 734.79ZM811.70 735.41L812.33 736.06L811.66 736.73L811.01 736.10ZM810.39 736.36L810.37 737.26L809.43 737.26L809.41 736.36ZM808.79 736.10L808.14 736.73L807.47 736.06L808.10 735.41ZM807.84 734.79L806.94 734.77L806.94 733.83L807.84 733.81ZM808.10 733.19L807.47 732.54L808.14 731.87L808.79 732.50ZM809.41 732.24L809.43 731.34L810.37 731.34L810.39 732.24ZM811.01 732.50L811.66 731.87L812.33 732.54L811.70 733.19ZM810.95 734.30A1.05 1.05 0 1 0 808.85 734.30A1.05 1.05 0 1 0 810.95 734.30Z"/></svg>
<div class="rl" style="top:743px"></div>
<div class="x" style="left:62.6px;top:757px;font-size:13px;line-height:17px;color:#4a4a4e;letter-spacing:-0.17px;">FCP Total Ops</div>
<div class="x" style="left:260.9px;top:757px;font-size:13px;line-height:17px;color:#4a4a4e;">6</div>
<div class="x" style="left:332.9px;top:757px;font-size:13px;line-height:17px;color:#4a4a4e;letter-spacing:-0.15px;">0 #</div>
<div class="x" style="left:403.8px;top:757px;font-size:13px;line-height:17px;color:#4a4a4e;letter-spacing:0.35px;">0 #/s</div>
<div class="x" style="left:557.3px;top:757px;font-size:13px;line-height:17px;color:#4a4a4e;letter-spacing:0.35px;">0 #/s</div>
<div class="x" style="left:710.2px;top:757px;font-size:13px;line-height:17px;color:#4a4a4e;letter-spacing:0.35px;">0 #/s</div>
<svg style="left:800px;top:743px" width="30" height="33" viewBox="800 743 30 33"><path fill="#3a3a3a" fill-rule="nonzero" d="M812.00 761.40A3.90 3.90 0 1 1 819.80 761.40A3.90 3.90 0 1 1 812.00 761.40ZM819.31 760.58L820.64 760.65L820.64 762.15L819.31 762.22ZM818.89 763.23L819.78 764.22L818.72 765.28L817.73 764.39ZM816.72 764.81L816.65 766.14L815.15 766.14L815.08 764.81ZM814.07 764.39L813.08 765.28L812.02 764.22L812.91 763.23ZM812.49 762.22L811.16 762.15L811.16 760.65L812.49 760.58ZM812.91 759.57L812.02 758.58L813.08 757.52L814.07 758.41ZM815.08 757.99L815.15 756.66L816.65 756.66L816.72 757.99ZM817.73 758.41L818.72 757.52L819.78 758.58L818.89 759.57ZM818.00 761.40A2.10 2.10 0 1 0 813.80 761.40A2.10 2.10 0 1 0 818.00 761.40ZM807.55 767.30A2.35 2.35 0 1 1 812.25 767.30A2.35 2.35 0 1 1 807.55 767.30ZM811.96 766.81L812.86 766.83L812.86 767.77L811.96 767.79ZM811.70 768.41L812.33 769.06L811.66 769.73L811.01 769.10ZM810.39 769.36L810.37 770.26L809.43 770.26L809.41 769.36ZM808.79 769.10L808.14 769.73L807.47 769.06L808.10 768.41ZM807.84 767.79L806.94 767.77L806.94 766.83L807.84 766.81ZM808.10 766.19L807.47 765.54L808.14 764.87L808.79 765.50ZM809.41 765.24L809.43 764.34L810.37 764.34L810.39 765.24ZM811.01 765.50L811.66 764.87L812.33 765.54L811.70 766.19ZM810.95 767.30A1.05 1.05 0 1 0 808.85 767.30A1.05 1.05 0 1 0 810.95 767.30Z"/></svg>
<div class="rl" style="top:776px"></div>
<div class="x" style="left:62.6px;top:790px;font-size:13px;line-height:17px;color:#4a4a4e;letter-spacing:-0.21px;">FCP Write</div>
<div class="x" style="left:260.9px;top:790px;font-size:13px;line-height:17px;color:#4a4a4e;">8</div>
<div class="x" style="left:321.4px;top:790px;font-size:13px;line-height:17px;color:#4a4a4e;letter-spacing:-0.27px;">0 MB</div>
<div class="x" style="left:385.4px;top:790px;font-size:13px;line-height:17px;color:#4a4a4e;letter-spacing:0.4px;">0 Mbit/s</div>
<div class="x" style="left:538.9px;top:790px;font-size:13px;line-height:17px;color:#4a4a4e;letter-spacing:0.4px;">0 Mbit/s</div>
<div class="x" style="left:691.8px;top:790px;font-size:13px;line-height:17px;color:#4a4a4e;letter-spacing:0.4px;">0 Mbit/s</div>
<svg style="left:800px;top:776px" width="30" height="33" viewBox="800 776 30 33"><path fill="#3a3a3a" fill-rule="nonzero" d="M812.00 794.40A3.90 3.90 0 1 1 819.80 794.40A3.90 3.90 0 1 1 812.00 794.40ZM819.31 793.58L820.64 793.65L820.64 795.15L819.31 795.22ZM818.89 796.23L819.78 797.22L818.72 798.28L817.73 797.39ZM816.72 797.81L816.65 799.14L815.15 799.14L815.08 797.81ZM814.07 797.39L813.08 798.28L812.02 797.22L812.91 796.23ZM812.49 795.22L811.16 795.15L811.16 793.65L812.49 793.58ZM812.91 792.57L812.02 791.58L813.08 790.52L814.07 791.41ZM815.08 790.99L815.15 789.66L816.65 789.66L816.72 790.99ZM817.73 791.41L818.72 790.52L819.78 791.58L818.89 792.57ZM818.00 794.40A2.10 2.10 0 1 0 813.80 794.40A2.10 2.10 0 1 0 818.00 794.40ZM807.55 800.30A2.35 2.35 0 1 1 812.25 800.30A2.35 2.35 0 1 1 807.55 800.30ZM811.96 799.81L812.86 799.83L812.86 800.77L811.96 800.79ZM811.70 801.41L812.33 802.06L811.66 802.73L811.01 802.10ZM810.39 802.36L810.37 803.26L809.43 803.26L809.41 802.36ZM808.79 802.10L808.14 802.73L807.47 802.06L808.10 801.41ZM807.84 800.79L806.94 800.77L806.94 799.83L807.84 799.81ZM808.10 799.19L807.47 798.54L808.14 797.87L808.79 798.50ZM809.41 798.24L809.43 797.34L810.37 797.34L810.39 798.24ZM811.01 798.50L811.66 797.87L812.33 798.54L811.70 799.19ZM810.95 800.30A1.05 1.05 0 1 0 808.85 800.30A1.05 1.05 0 1 0 810.95 800.30Z"/></svg>
<div class="rl" style="top:809px"></div>
<div class="x" style="left:62.6px;top:823px;font-size:13px;line-height:17px;color:#4a4a4e;letter-spacing:-0.46px;">iSCSI Read</div>
<div class="x" style="left:253.9px;top:823px;font-size:13px;line-height:17px;color:#4a4a4e;">10</div>
<div class="x" style="left:321.4px;top:823px;font-size:13px;line-height:17px;color:#4a4a4e;letter-spacing:-0.27px;">0 MB</div>
<div class="x" style="left:385.4px;top:823px;font-size:13px;line-height:17px;color:#4a4a4e;letter-spacing:0.4px;">0 Mbit/s</div>
<div class="x" style="left:538.9px;top:823px;font-size:13px;line-height:17px;color:#4a4a4e;letter-spacing:0.4px;">0 Mbit/s</div>
<div class="x" style="left:691.8px;top:823px;font-size:13px;line-height:17px;color:#4a4a4e;letter-spacing:0.4px;">0 Mbit/s</div>
<svg style="left:800px;top:809px" width="30" height="33" viewBox="800 809 30 33"><path fill="#3a3a3a" fill-rule="nonzero" d="M812.00 827.40A3.90 3.90 0 1 1 819.80 827.40A3.90 3.90 0 1 1 812.00 827.40ZM819.31 826.58L820.64 826.65L820.64 828.15L819.31 828.22ZM818.89 829.23L819.78 830.22L818.72 831.28L817.73 830.39ZM816.72 830.81L816.65 832.14L815.15 832.14L815.08 830.81ZM814.07 830.39L813.08 831.28L812.02 830.22L812.91 829.23ZM812.49 828.22L811.16 828.15L811.16 826.65L812.49 826.58ZM812.91 825.57L812.02 824.58L813.08 823.52L814.07 824.41ZM815.08 823.99L815.15 822.66L816.65 822.66L816.72 823.99ZM817.73 824.41L818.72 823.52L819.78 824.58L818.89 825.57ZM818.00 827.40A2.10 2.10 0 1 0 813.80 827.40A2.10 2.10 0 1 0 818.00 827.40ZM807.55 833.30A2.35 2.35 0 1 1 812.25 833.30A2.35 2.35 0 1 1 807.55 833.30ZM811.96 832.81L812.86 832.83L812.86 833.77L811.96 833.79ZM811.70 834.41L812.33 835.06L811.66 835.73L811.01 835.10ZM810.39 835.36L810.37 836.26L809.43 836.26L809.41 835.36ZM808.79 835.10L808.14 835.73L807.47 835.06L808.10 834.41ZM807.84 833.79L806.94 833.77L806.94 832.83L807.84 832.81ZM808.10 832.19L807.47 831.54L808.14 830.87L808.79 831.50ZM809.41 831.24L809.43 830.34L810.37 830.34L810.39 831.24ZM811.01 831.50L811.66 830.87L812.33 831.54L811.70 832.19ZM810.95 833.30A1.05 1.05 0 1 0 808.85 833.30A1.05 1.05 0 1 0 810.95 833.30Z"/></svg>
<div class="rl" style="top:842px"></div>
</body></html>
